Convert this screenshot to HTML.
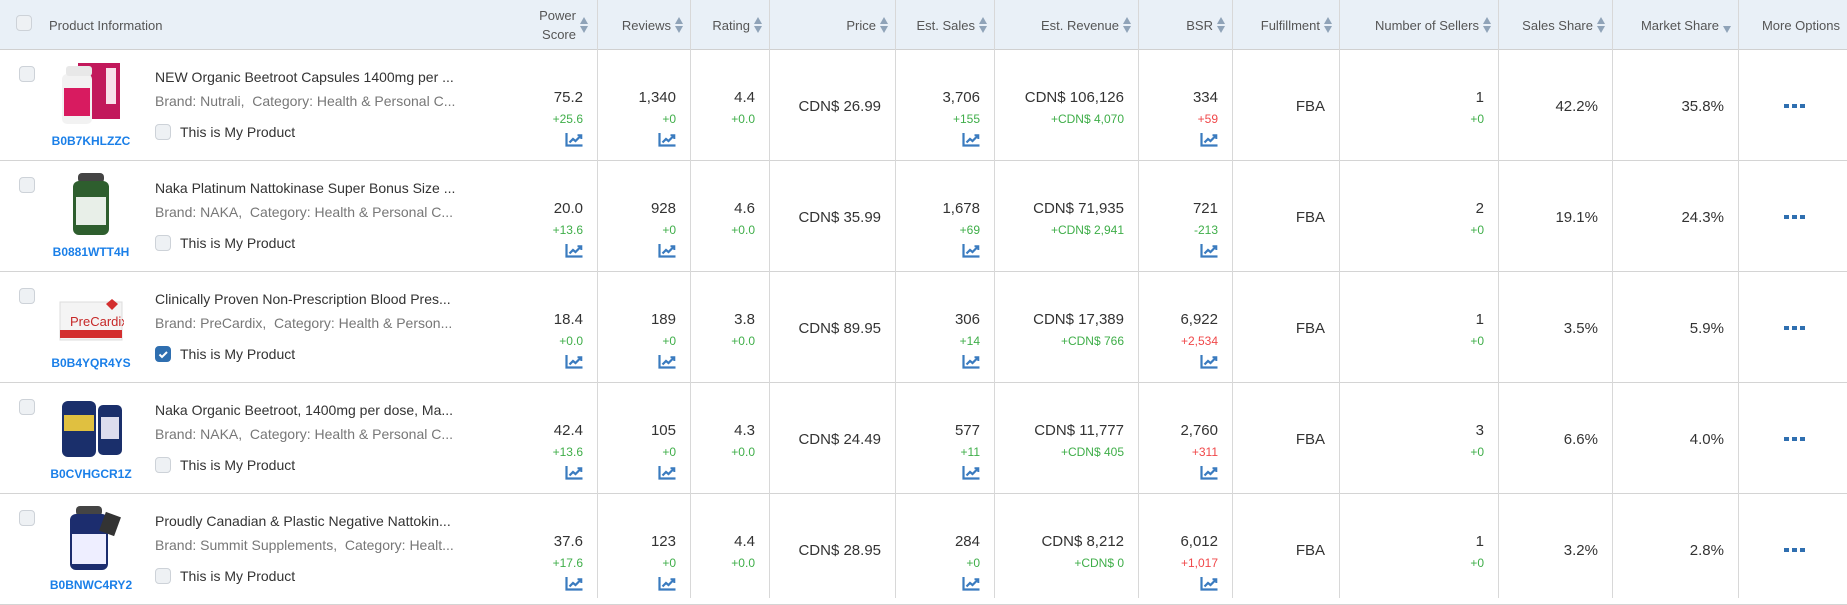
<!DOCTYPE html>
<html><head><meta charset="utf-8"><style>
*{box-sizing:border-box;margin:0;padding:0}
body{width:1847px;height:598px;overflow:hidden;background:#fff;font-family:"Liberation Sans",sans-serif;color:#333;position:relative}
.hdr{position:absolute;left:0;top:0;width:1847px;height:50px;background:#e9f0f7;border-bottom:1px solid #d0d0d0}
.row{position:absolute;left:0;width:1847px;height:111px;border-bottom:1px solid #d4d4d4}
.vl{position:absolute;top:0;width:1px;height:598px;background:#d8d8d8}
.h{position:absolute;top:0;height:50px;font-size:13px;color:#555;display:flex;align-items:center;justify-content:flex-end;text-align:right;line-height:19px}
.ar{display:inline-block;width:8px;margin-left:4px;position:relative;height:16px}
.ar:before{content:"";position:absolute;left:0;top:0;border-left:4px solid transparent;border-right:4px solid transparent;border-bottom:7px solid #8fa3b8}
.ar:after{content:"";position:absolute;left:0;top:9px;border-left:4px solid transparent;border-right:4px solid transparent;border-top:7px solid #8fa3b8}
.ar.dn:before{display:none}
.cb{position:absolute;width:16px;height:16px;border:1px solid #cdd2d8;border-radius:4px;background:#eef1f4}
.cb.on{background:#2f6fb0;border-color:#2f6fb0}
.c{position:absolute;top:0;height:111px;text-align:right}
.v{position:absolute;right:14px;top:38px;font-size:15px;line-height:20px;white-space:nowrap}
.d{position:absolute;right:14px;top:61px;font-size:12px;line-height:16px;color:#3fae49;white-space:nowrap}
.d.r{color:#f0484a}
.m{position:absolute;right:14px;top:47px;font-size:15px;line-height:20px;white-space:nowrap}
.i{position:absolute;right:14px;top:83px;width:18px;height:14px}
.t{position:absolute;left:155px;font-size:14px;white-space:nowrap}
.asin{position:absolute;left:40px;width:102px;text-align:center;top:84px;font-size:12px;font-weight:bold;color:#1a7fe8}
.img{position:absolute;left:58px;top:10px;width:66px;height:68px}
.dots{position:absolute;left:46px;top:54px;width:22px;height:4px;background:linear-gradient(90deg,#2f6fb0 0 5px,transparent 5px 8px,#2f6fb0 8px 13px,transparent 13px 16px,#2f6fb0 16px 21px,transparent 21px)}
</style></head><body>
<svg width="0" height="0" style="position:absolute"><defs><symbol id="ch" viewBox="0 0 18 14"><path d="M1.5 0V12.5H17.5" fill="none" stroke="#3a7bbf" stroke-width="2.2"/><path d="M4.5 9.5L8 6L10.5 8L15.5 3" fill="none" stroke="#3a7bbf" stroke-width="2.2"/><path d="M12.5 2.2H16.3V6" fill="none" stroke="#3a7bbf" stroke-width="2"/></symbol></defs></svg>

<div class="hdr">
<div class="cb" style="left:16px;top:15px"></div>
<div class="h" style="left:49px;justify-content:flex-start">Product Information</div>
<div class="h" style="left:500px;width:88px">Power<br>Score<span class="ar"></span></div>
<div class="h" style="left:597px;width:86px">Reviews<span class="ar"></span></div>
<div class="h" style="left:690px;width:72px">Rating<span class="ar"></span></div>
<div class="h" style="left:769px;width:119px">Price<span class="ar"></span></div>
<div class="h" style="left:895px;width:92px">Est. Sales<span class="ar"></span></div>
<div class="h" style="left:994px;width:137px">Est. Revenue<span class="ar"></span></div>
<div class="h" style="left:1138px;width:87px">BSR<span class="ar"></span></div>
<div class="h" style="left:1232px;width:100px">Fulfillment<span class="ar"></span></div>
<div class="h" style="left:1339px;width:152px">Number of Sellers<span class="ar"></span></div>
<div class="h" style="left:1498px;width:107px">Sales Share<span class="ar"></span></div>
<div class="h" style="left:1612px;width:119px">Market Share<span class="ar dn"></span></div>
<div class="h" style="left:1738px;width:102px">More Options</div>
</div>

<!-- ROW TEMPLATE -->
<div class="row" style="top:50px">
<div class="cb" style="left:19px;top:16px"></div>
<div class="img"><svg width="66" height="68"><rect x="20" y="3" width="42" height="56" fill="#c2185b"/><rect x="48" y="8" width="10" height="36" fill="#f8e0ea"/><rect x="4" y="14" width="30" height="50" rx="5" fill="#f2f2f2"/><rect x="6" y="28" width="26" height="28" fill="#d81b60"/><rect x="8" y="6" width="26" height="10" rx="3" fill="#e8e8e8"/></svg></div>
<div class="asin">B0B7KHLZZC</div>
<div class="t" style="top:19px;color:#333">NEW Organic Beetroot Capsules 1400mg per ...</div>
<div class="t" style="top:43px;color:#777">Brand: Nutrali,&nbsp; Category: Health &amp; Personal C...</div>
<div class="cb" style="left:155px;top:74px"></div>
<div class="t" style="left:180px;top:74px;color:#333">This is My Product</div>
<div class="c" style="left:597px;width:0"></div>
<div class="c" style="left:500px;width:97px"><div class="v">75.2</div><div class="d">+25.6</div><svg class="i"><use href="#ch"/></svg></div>
<div class="c" style="left:597px;width:93px"><div class="v">1,340</div><div class="d">+0</div><svg class="i"><use href="#ch"/></svg></div>
<div class="c" style="left:690px;width:79px"><div class="v">4.4</div><div class="d">+0.0</div></div>
<div class="c" style="left:769px;width:126px"><div class="m">CDN$ 26.99</div></div>
<div class="c" style="left:895px;width:99px"><div class="v">3,706</div><div class="d">+155</div><svg class="i"><use href="#ch"/></svg></div>
<div class="c" style="left:994px;width:144px"><div class="v">CDN$ 106,126</div><div class="d">+CDN$ 4,070</div></div>
<div class="c" style="left:1138px;width:94px"><div class="v">334</div><div class="d r">+59</div><svg class="i"><use href="#ch"/></svg></div>
<div class="c" style="left:1232px;width:107px"><div class="m">FBA</div></div>
<div class="c" style="left:1339px;width:159px"><div class="v">1</div><div class="d">+0</div></div>
<div class="c" style="left:1498px;width:114px"><div class="m">42.2%</div></div>
<div class="c" style="left:1612px;width:126px"><div class="m">35.8%</div></div>
<div class="c" style="left:1738px;width:109px"><div class="dots"></div></div>
</div>

<div class="row" style="top:161px">
<div class="cb" style="left:19px;top:16px"></div>
<div class="img"><svg width="66" height="68"><rect x="20" y="2" width="26" height="10" rx="4" fill="#444"/><rect x="15" y="10" width="36" height="54" rx="6" fill="#2e5e2e"/><rect x="18" y="26" width="30" height="28" fill="#e8efe8"/></svg></div>
<div class="asin">B0881WTT4H</div>
<div class="t" style="top:19px">Naka Platinum Nattokinase Super Bonus Size ...</div>
<div class="t" style="top:43px;color:#777">Brand: NAKA,&nbsp; Category: Health &amp; Personal C...</div>
<div class="cb" style="left:155px;top:74px"></div>
<div class="t" style="left:180px;top:74px">This is My Product</div>
<div class="c" style="left:500px;width:97px"><div class="v">20.0</div><div class="d">+13.6</div><svg class="i"><use href="#ch"/></svg></div>
<div class="c" style="left:597px;width:93px"><div class="v">928</div><div class="d">+0</div><svg class="i"><use href="#ch"/></svg></div>
<div class="c" style="left:690px;width:79px"><div class="v">4.6</div><div class="d">+0.0</div></div>
<div class="c" style="left:769px;width:126px"><div class="m">CDN$ 35.99</div></div>
<div class="c" style="left:895px;width:99px"><div class="v">1,678</div><div class="d">+69</div><svg class="i"><use href="#ch"/></svg></div>
<div class="c" style="left:994px;width:144px"><div class="v">CDN$ 71,935</div><div class="d">+CDN$ 2,941</div></div>
<div class="c" style="left:1138px;width:94px"><div class="v">721</div><div class="d">-213</div><svg class="i"><use href="#ch"/></svg></div>
<div class="c" style="left:1232px;width:107px"><div class="m">FBA</div></div>
<div class="c" style="left:1339px;width:159px"><div class="v">2</div><div class="d">+0</div></div>
<div class="c" style="left:1498px;width:114px"><div class="m">19.1%</div></div>
<div class="c" style="left:1612px;width:126px"><div class="m">24.3%</div></div>
<div class="c" style="left:1738px;width:109px"><div class="dots"></div></div>
</div>

<div class="row" style="top:272px">
<div class="cb" style="left:19px;top:16px"></div>
<div class="img"><svg width="66" height="68"><rect x="2" y="20" width="62" height="38" fill="#f4f4f4" stroke="#ddd"/><rect x="2" y="48" width="62" height="8" fill="#d32f2f"/><text x="12" y="44" font-size="13" fill="#c62828" font-family="Liberation Sans">PreCardix</text><path d="M48 22l6-5 6 5-6 6z" fill="#d32f2f"/></svg></div>
<div class="asin">B0B4YQR4YS</div>
<div class="t" style="top:19px">Clinically Proven Non-Prescription Blood Pres...</div>
<div class="t" style="top:43px;color:#777">Brand: PreCardix,&nbsp; Category: Health &amp; Person...</div>
<div class="cb on" style="left:155px;top:74px"><svg width="14" height="14" style="position:absolute;left:0;top:0"><path d="M3.5 7.5l2.5 2.5 5-5" fill="none" stroke="#fff" stroke-width="2"/></svg></div>
<div class="t" style="left:180px;top:74px">This is My Product</div>
<div class="c" style="left:500px;width:97px"><div class="v">18.4</div><div class="d">+0.0</div><svg class="i"><use href="#ch"/></svg></div>
<div class="c" style="left:597px;width:93px"><div class="v">189</div><div class="d">+0</div><svg class="i"><use href="#ch"/></svg></div>
<div class="c" style="left:690px;width:79px"><div class="v">3.8</div><div class="d">+0.0</div></div>
<div class="c" style="left:769px;width:126px"><div class="m">CDN$ 89.95</div></div>
<div class="c" style="left:895px;width:99px"><div class="v">306</div><div class="d">+14</div><svg class="i"><use href="#ch"/></svg></div>
<div class="c" style="left:994px;width:144px"><div class="v">CDN$ 17,389</div><div class="d">+CDN$ 766</div></div>
<div class="c" style="left:1138px;width:94px"><div class="v">6,922</div><div class="d r">+2,534</div><svg class="i"><use href="#ch"/></svg></div>
<div class="c" style="left:1232px;width:107px"><div class="m">FBA</div></div>
<div class="c" style="left:1339px;width:159px"><div class="v">1</div><div class="d">+0</div></div>
<div class="c" style="left:1498px;width:114px"><div class="m">3.5%</div></div>
<div class="c" style="left:1612px;width:126px"><div class="m">5.9%</div></div>
<div class="c" style="left:1738px;width:109px"><div class="dots"></div></div>
</div>

<div class="row" style="top:383px">
<div class="cb" style="left:19px;top:16px"></div>
<div class="img"><svg width="66" height="68"><rect x="4" y="8" width="34" height="56" rx="6" fill="#1a2f6b"/><rect x="6" y="22" width="30" height="16" fill="#e0c040"/><rect x="40" y="12" width="24" height="50" rx="5" fill="#1a2f6b"/><rect x="43" y="24" width="18" height="22" fill="#dde"/></svg></div>
<div class="asin">B0CVHGCR1Z</div>
<div class="t" style="top:19px">Naka Organic Beetroot, 1400mg per dose, Ma...</div>
<div class="t" style="top:43px;color:#777">Brand: NAKA,&nbsp; Category: Health &amp; Personal C...</div>
<div class="cb" style="left:155px;top:74px"></div>
<div class="t" style="left:180px;top:74px">This is My Product</div>
<div class="c" style="left:500px;width:97px"><div class="v">42.4</div><div class="d">+13.6</div><svg class="i"><use href="#ch"/></svg></div>
<div class="c" style="left:597px;width:93px"><div class="v">105</div><div class="d">+0</div><svg class="i"><use href="#ch"/></svg></div>
<div class="c" style="left:690px;width:79px"><div class="v">4.3</div><div class="d">+0.0</div></div>
<div class="c" style="left:769px;width:126px"><div class="m">CDN$ 24.49</div></div>
<div class="c" style="left:895px;width:99px"><div class="v">577</div><div class="d">+11</div><svg class="i"><use href="#ch"/></svg></div>
<div class="c" style="left:994px;width:144px"><div class="v">CDN$ 11,777</div><div class="d">+CDN$ 405</div></div>
<div class="c" style="left:1138px;width:94px"><div class="v">2,760</div><div class="d r">+311</div><svg class="i"><use href="#ch"/></svg></div>
<div class="c" style="left:1232px;width:107px"><div class="m">FBA</div></div>
<div class="c" style="left:1339px;width:159px"><div class="v">3</div><div class="d">+0</div></div>
<div class="c" style="left:1498px;width:114px"><div class="m">6.6%</div></div>
<div class="c" style="left:1612px;width:126px"><div class="m">4.0%</div></div>
<div class="c" style="left:1738px;width:109px"><div class="dots"></div></div>
</div>

<div class="row" style="top:494px">
<div class="cb" style="left:19px;top:16px"></div>
<div class="img"><svg width="66" height="68"><rect x="18" y="2" width="26" height="10" rx="4" fill="#444"/><rect x="12" y="10" width="38" height="56" rx="6" fill="#1c2d6e"/><rect x="14" y="30" width="34" height="30" fill="#eef"/><rect x="44" y="10" width="16" height="20" fill="#333" transform="rotate(20 52 20)"/></svg></div>
<div class="asin">B0BNWC4RY2</div>
<div class="t" style="top:19px">Proudly Canadian &amp; Plastic Negative Nattokin...</div>
<div class="t" style="top:43px;color:#777">Brand: Summit Supplements,&nbsp; Category: Healt...</div>
<div class="cb" style="left:155px;top:74px"></div>
<div class="t" style="left:180px;top:74px">This is My Product</div>
<div class="c" style="left:500px;width:97px"><div class="v">37.6</div><div class="d">+17.6</div><svg class="i"><use href="#ch"/></svg></div>
<div class="c" style="left:597px;width:93px"><div class="v">123</div><div class="d">+0</div><svg class="i"><use href="#ch"/></svg></div>
<div class="c" style="left:690px;width:79px"><div class="v">4.4</div><div class="d">+0.0</div></div>
<div class="c" style="left:769px;width:126px"><div class="m">CDN$ 28.95</div></div>
<div class="c" style="left:895px;width:99px"><div class="v">284</div><div class="d">+0</div><svg class="i"><use href="#ch"/></svg></div>
<div class="c" style="left:994px;width:144px"><div class="v">CDN$ 8,212</div><div class="d">+CDN$ 0</div></div>
<div class="c" style="left:1138px;width:94px"><div class="v">6,012</div><div class="d r">+1,017</div><svg class="i"><use href="#ch"/></svg></div>
<div class="c" style="left:1232px;width:107px"><div class="m">FBA</div></div>
<div class="c" style="left:1339px;width:159px"><div class="v">1</div><div class="d">+0</div></div>
<div class="c" style="left:1498px;width:114px"><div class="m">3.2%</div></div>
<div class="c" style="left:1612px;width:126px"><div class="m">2.8%</div></div>
<div class="c" style="left:1738px;width:109px"><div class="dots"></div></div>
</div>

<div class="vl" style="left:597px"></div>
<div class="vl" style="left:690px"></div>
<div class="vl" style="left:769px"></div>
<div class="vl" style="left:895px"></div>
<div class="vl" style="left:994px"></div>
<div class="vl" style="left:1138px"></div>
<div class="vl" style="left:1232px"></div>
<div class="vl" style="left:1339px"></div>
<div class="vl" style="left:1498px"></div>
<div class="vl" style="left:1612px"></div>
<div class="vl" style="left:1738px"></div>
</body></html>
